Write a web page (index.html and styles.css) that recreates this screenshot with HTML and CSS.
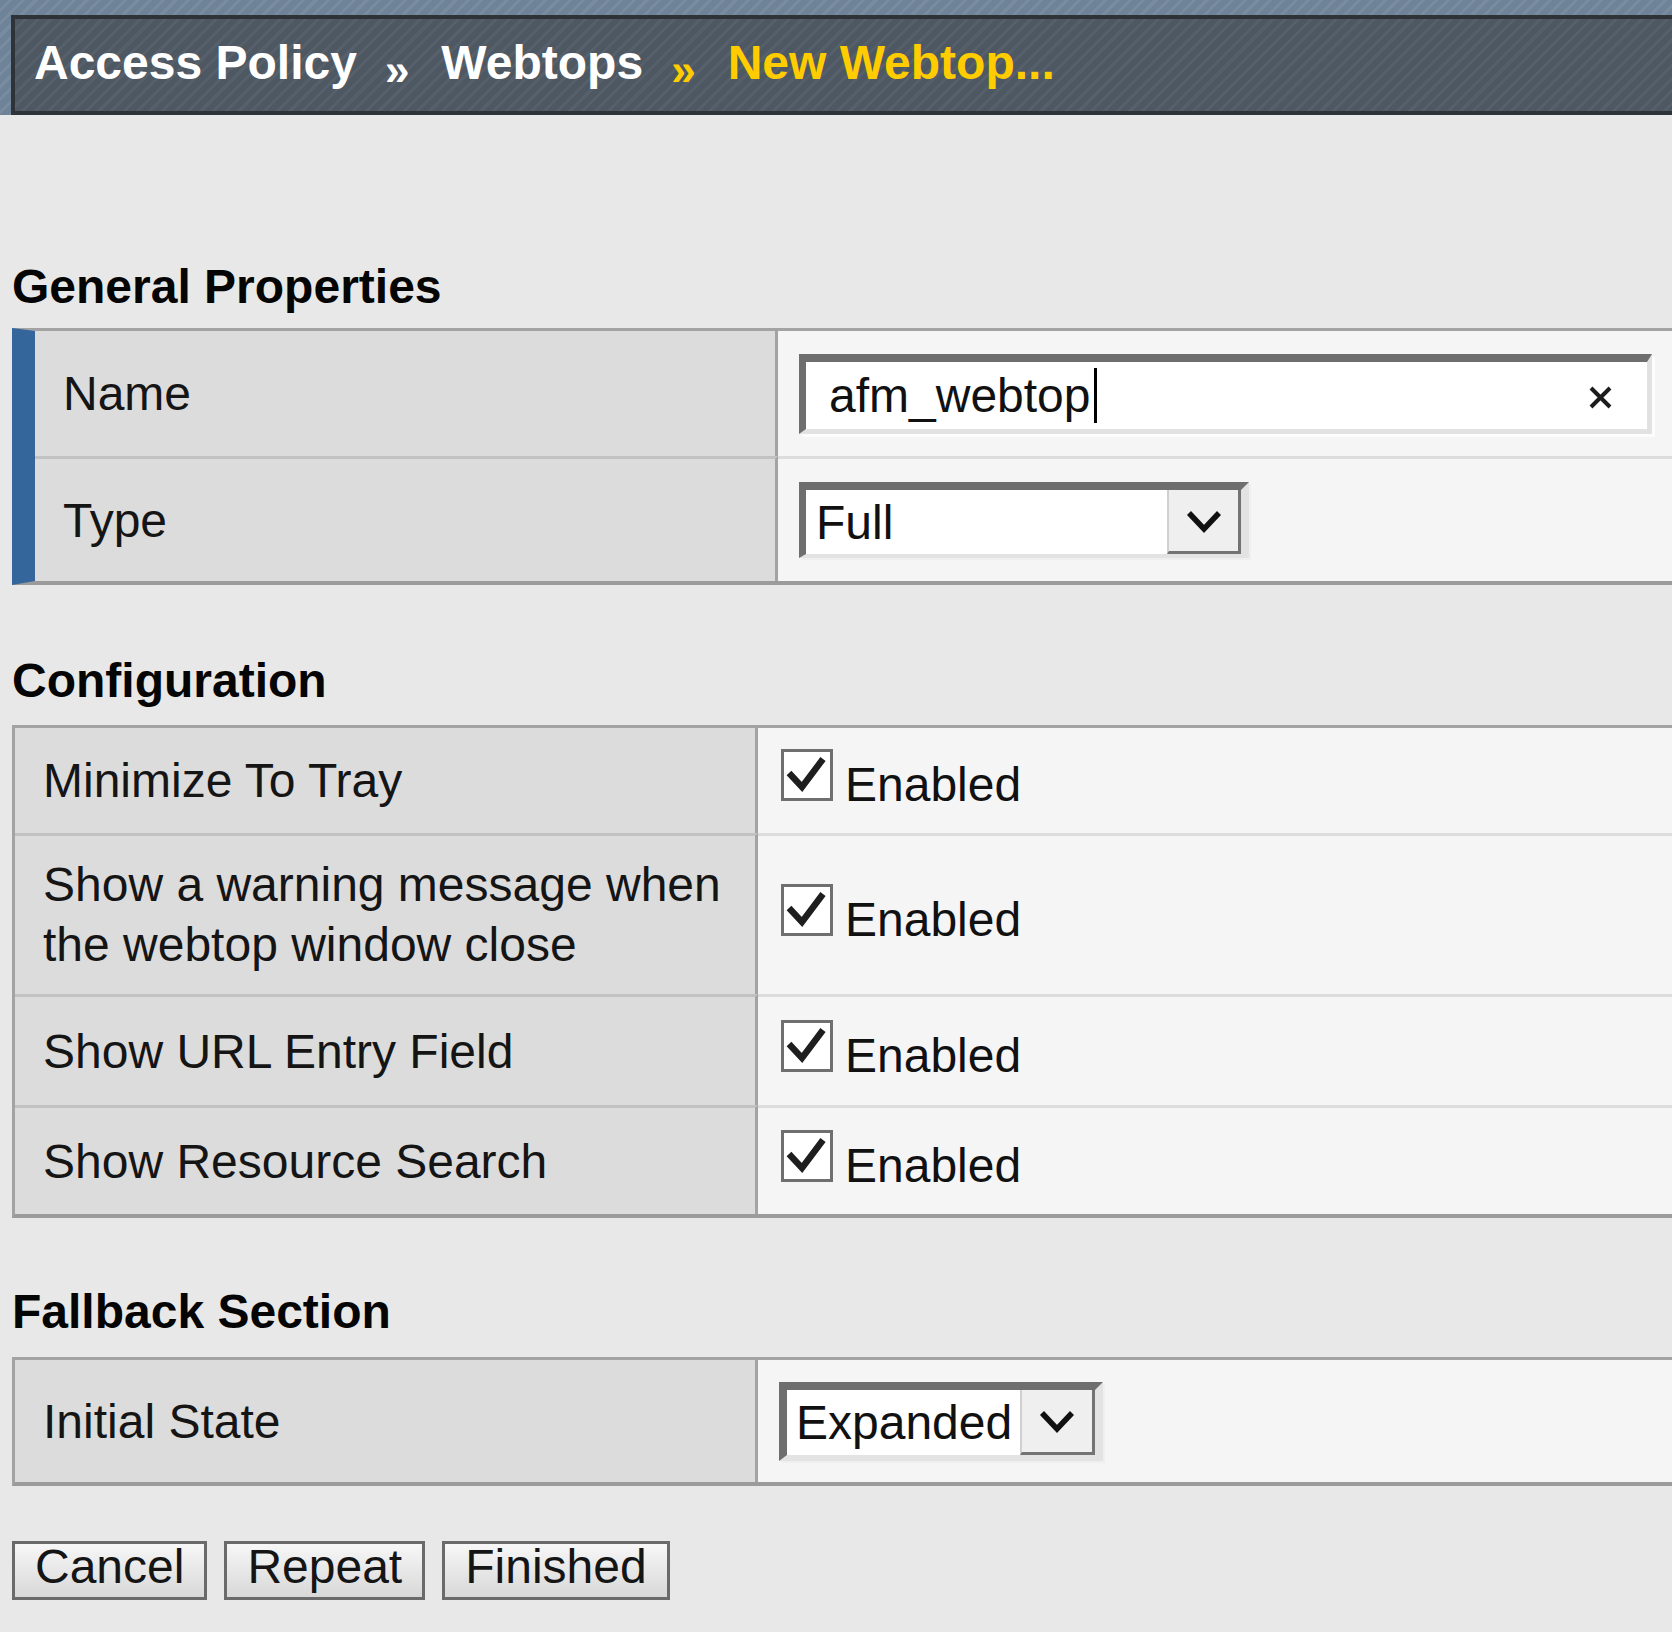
FILE: index.html
```html
<!DOCTYPE html>
<html lang="en">
<head>
<meta charset="utf-8">
<title>Access Policy » Webtops » New Webtop...</title>
<link rel="stylesheet" href="styles.css">
</head>
<body>
<div class="topband">
  <div class="crumbs">
    <span class="crumb">Access Policy</span><span class="sep">»</span><span class="crumb">Webtops</span><span class="sep current">»</span><span class="crumb current">New Webtop...</span>
  </div>
</div>

<div class="content">
  <h2 class="section-title title-general">General Properties</h2>
  <div class="prop-table marked">
    <div class="prop-row row-name">
      <div class="prop-label">Name</div>
      <div class="prop-value">
        <div class="textfield">
          <span class="textfield-value">afm_webtop</span><span class="caret"></span>
          <svg class="clear-btn" width="27" height="25" viewBox="0 0 27 25" aria-hidden="true">
            <path d="M4 3 L23 22 M23 3 L4 22" stroke="#1c1c1c" stroke-width="4" fill="none"/>
          </svg>
        </div>
      </div>
    </div>
    <div class="prop-row row-type">
      <div class="prop-label">Type</div>
      <div class="prop-value">
        <div class="select select-full">
          <span class="select-text">Full</span>
          <span class="select-btn">
            <svg width="36" height="26" viewBox="0 0 36 26" aria-hidden="true"><path d="M3 5 L18 21 L33 5" stroke="#111" stroke-width="5.5" fill="none"/></svg>
          </span>
        </div>
      </div>
    </div>
  </div>

  <h2 class="section-title title-config">Configuration</h2>
  <div class="prop-table">
    <div class="prop-row row-tray">
      <div class="prop-label">Minimize To Tray</div>
      <div class="prop-value">
        <div class="check"><svg class="box" width="52" height="52" viewBox="0 0 52 52" aria-hidden="true"><rect x="1.5" y="1.5" width="49" height="49" fill="#fff" stroke="#6f6f6f" stroke-width="3"/><path d="M8 24 L21 38 L42 10" stroke="#1e1e1e" stroke-width="6.5" fill="none"/></svg><span>Enabled</span></div>
      </div>
    </div>
    <div class="prop-row row-warn">
      <div class="prop-label">Show a warning message when<br>the webtop window close</div>
      <div class="prop-value">
        <div class="check"><svg class="box" width="52" height="52" viewBox="0 0 52 52" aria-hidden="true"><rect x="1.5" y="1.5" width="49" height="49" fill="#fff" stroke="#6f6f6f" stroke-width="3"/><path d="M8 24 L21 38 L42 10" stroke="#1e1e1e" stroke-width="6.5" fill="none"/></svg><span>Enabled</span></div>
      </div>
    </div>
    <div class="prop-row row-url">
      <div class="prop-label">Show URL Entry Field</div>
      <div class="prop-value">
        <div class="check"><svg class="box" width="52" height="52" viewBox="0 0 52 52" aria-hidden="true"><rect x="1.5" y="1.5" width="49" height="49" fill="#fff" stroke="#6f6f6f" stroke-width="3"/><path d="M8 24 L21 38 L42 10" stroke="#1e1e1e" stroke-width="6.5" fill="none"/></svg><span>Enabled</span></div>
      </div>
    </div>
    <div class="prop-row row-search">
      <div class="prop-label">Show Resource Search</div>
      <div class="prop-value">
        <div class="check"><svg class="box" width="52" height="52" viewBox="0 0 52 52" aria-hidden="true"><rect x="1.5" y="1.5" width="49" height="49" fill="#fff" stroke="#6f6f6f" stroke-width="3"/><path d="M8 24 L21 38 L42 10" stroke="#1e1e1e" stroke-width="6.5" fill="none"/></svg><span>Enabled</span></div>
      </div>
    </div>
  </div>

  <h2 class="section-title title-fallback">Fallback Section</h2>
  <div class="prop-table">
    <div class="prop-row row-initial">
      <div class="prop-label">Initial State</div>
      <div class="prop-value">
        <div class="select select-expanded">
          <span class="select-text">Expanded</span>
          <span class="select-btn">
            <svg width="36" height="26" viewBox="0 0 36 26" aria-hidden="true"><path d="M3 5 L18 21 L33 5" stroke="#111" stroke-width="5.5" fill="none"/></svg>
          </span>
        </div>
      </div>
    </div>
  </div>

  <div class="actions">
    <button class="btn" type="button">Cancel</button>
    <button class="btn" type="button">Repeat</button>
    <button class="btn" type="button">Finished</button>
  </div>
</div>
</body>
</html>
```

FILE: styles.css
```css
* { box-sizing: border-box; }

html, body { margin: 0; padding: 0; }

body {
  background: #e8e8e8;
  font-family: "Liberation Sans", Arial, sans-serif;
  font-size: 48px;
  line-height: 55px;
  color: #151515;
  overflow: hidden;
}

/* ---------- top band / breadcrumb ---------- */
.topband {
  height: 115px;
  padding: 15px 0 0 11px;
  background-color: #6f8398;
  background-image: repeating-linear-gradient(135deg, rgba(255,255,255,0) 0 6px, rgba(255,255,255,0.07) 6px 9px);
}

.crumbs {
  height: 100px;
  border: 4px solid #2e3338;
  border-right: 0;
  padding: 16px 0 0 19px;
  white-space: nowrap;
  background-color: #4e5863;
  background-image: repeating-linear-gradient(135deg, rgba(255,255,255,0) 0 6px, rgba(255,255,255,0.045) 6px 9px);
  color: #ffffff;
  font-weight: bold;
}

.crumb { display: inline-block; }

.sep {
  display: inline-block;
  font-size: 44px;
  margin: 0 32px 0 28px;
  vertical-align: -6px;
}

.current { color: #ffcc00; }

/* ---------- content ---------- */
.content { padding-left: 12px; }

.section-title {
  margin: 0;
  font-size: 48px;
  line-height: 55px;
  font-weight: bold;
  color: #050505;
}

.title-general { margin-top: 144px; margin-bottom: 14px; }
.title-config { margin-top: 68px; margin-bottom: 17px; }
.title-fallback { margin-top: 66px; margin-bottom: 18px; }

.prop-table {
  border-top: 3px solid #a3a3a3;
  border-bottom: 4px solid #9b9b9b;
  border-left: 3px solid #a3a3a3;
}

.prop-table.marked { border-left: 23px solid #35669b; }

.prop-row {
  display: grid;
  grid-template-columns: 743px 1fr;
}

.prop-label {
  background: #dcdcdc;
  border-right: 3px solid #a3a3a3;
  padding-left: 28px;
  display: flex;
  align-items: center;
  color: #151515;
}

.prop-value {
  background: #f5f5f5;
  padding-left: 21px;
  display: flex;
  align-items: center;
}

.prop-row + .prop-row .prop-label { border-top: 3px solid #c2c2c2; }
.prop-row + .prop-row .prop-value { border-top: 3px solid #dcdcdc; }

.row-name { height: 125px; }
.row-type { height: 125px; }
.row-tray { height: 105px; }
.row-warn { height: 161px; }
.row-warn .prop-label { line-height: 60px; }
.row-url { height: 111px; }
.row-search { height: 109px; }
.row-initial { height: 122px; }

/* ---------- text field ---------- */
.textfield {
  width: 853px;
  height: 80px;
  display: flex;
  align-items: center;
  background: #ffffff;
  border-style: solid;
  border-width: 8px 5px 5px 7px;
  border-color: #6e6e6e #e2e2e2 #e2e2e2 #6e6e6e;
  box-shadow: 3px 3px 0 #fdfdfd;
  padding-left: 23px;
  color: #111;
}

.caret {
  display: inline-block;
  width: 3px;
  height: 55px;
  background: #000;
  margin-left: 3px;
}

.clear-btn {
  margin-left: auto;
  margin-right: 33px;
  margin-top: 4px;
}

/* ---------- select ---------- */
.select {
  display: flex;
  background: #ffffff;
  border-style: solid;
  border-color: #6e6e6e #e3e3e3 #e3e3e3 #6e6e6e;
  box-shadow: 2px 2px 0 #efefef;
  color: #111;
}

.select-full {
  width: 450px;
  height: 76px;
  border-width: 8px 8px 4px 7px;
}

.select-expanded {
  width: 324px;
  height: 79px;
  border-width: 8px 8px 6px 8px;
}

.select-text {
  flex: 1;
  display: flex;
  align-items: center;
  padding-left: 10px;
}

.select-expanded .select-text { padding-left: 9px; }

.select-btn {
  width: 74px;
  background: #efefef;
  border-left: 2px solid #d0d0d0;
  border-right: 3px solid #737373;
  border-bottom: 3px solid #737373;
  display: flex;
  align-items: center;
  justify-content: center;
}

.select-expanded .select-btn { width: 75px; }

/* ---------- checkbox ---------- */
.check {
  display: block;
  line-height: 55px;
  color: #111;
  white-space: nowrap;
  margin-left: 2px;
}

.check .box {
  margin-right: 12px;
  vertical-align: baseline;
}

/* ---------- buttons ---------- */
.actions {
  margin-top: 55px;
  display: flex;
  gap: 17px;
}

.btn {
  height: 59px;
  margin: 0;
  padding: 0 20px 8px;
  border: 3px solid #6a6a6a;
  border-radius: 0;
  background: linear-gradient(#f7f7f7, #d8d8d8);
  font-family: "Liberation Sans", Arial, sans-serif;
  font-size: 48px;
  line-height: 45px;
  color: #151515;
}
```
